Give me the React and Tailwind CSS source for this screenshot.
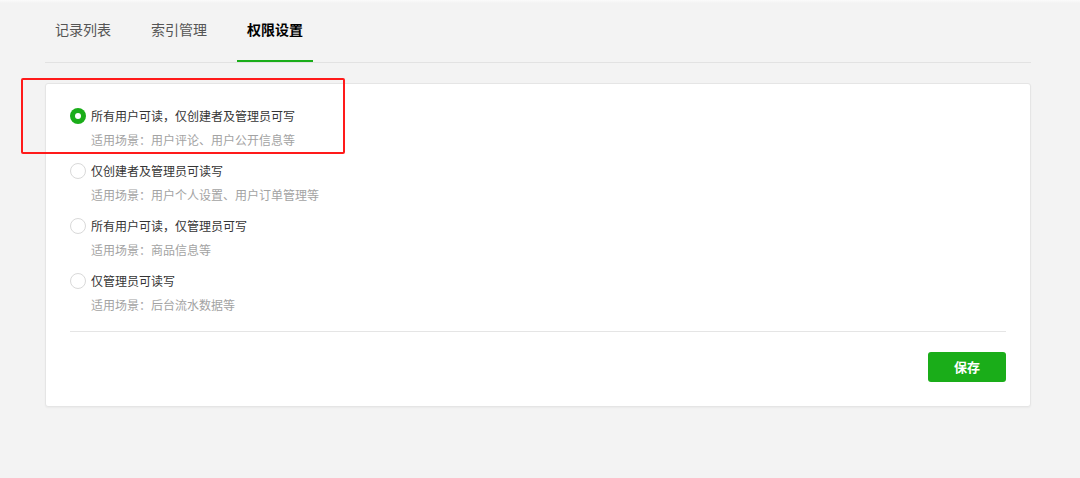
const options = [
  { title: '所有用户可读，仅创建者及管理员可写', desc: '适用场景：用户评论、用户公开信息等' },
  { title: '仅创建者及管理员可读写', desc: '适用场景：用户个人设置、用户订单管理等' },
  { title: '所有用户可读，仅管理员可写', desc: '适用场景：商品信息等' },
  { title: '仅管理员可读写', desc: '适用场景：后台流水数据等' },
];

const tabs = ['记录列表', '索引管理', '权限设置'];

const Radio = ({ checked }) =>
  checked ? (
    <span className="flex h-4 w-4 shrink-0 items-center justify-center rounded-full bg-[#1aad19]">
      <span className="h-[6px] w-[6px] rounded-full bg-white" />
    </span>
  ) : (
    <span className="h-4 w-4 shrink-0 rounded-full border border-[#d9d9d9] bg-white" />
  );

const App = () => {
  const active = 2;
  const selected = 0;

  return (
    <div
      className="relative h-[478px] w-full overflow-hidden bg-[#f3f3f3]"
      style={{ fontFamily: '"Noto Sans CJK SC", "Noto Sans", sans-serif' }}
    >
      <div className="h-[3px] bg-gradient-to-b from-[#fbfbfb] to-[#f3f3f3]" />

      <div className="ml-[45px] w-[986px]">
        {/* tabs */}
        <div className="flex h-[60px] gap-5 border-b border-[#e2e2e2]">
          {tabs.map((t, i) => (
            <div
              key={t}
              className={
                'flex items-center px-[10px] pb-[4px] text-[14px] ' +
                (i === active
                  ? 'border-b-2 border-[#1aad19] font-bold text-[#000]'
                  : 'border-b-2 border-transparent text-[#555]')
              }
            >
              {t}
            </div>
          ))}
        </div>

        {/* card */}
        <div className="mt-5 rounded-[3px] border border-[#e5e5e5] bg-white px-6 pb-6 pt-[22px] shadow-[0_1px_2px_rgba(0,0,0,0.04)]">
          <div className="flex flex-col gap-[11px]">
            {options.map((o, i) => (
              <div key={o.title} className="flex flex-col gap-1">
                <div className="flex h-5 items-center gap-[5px]">
                  <Radio checked={i === selected} />
                  <span className="text-[12px] text-[#353535]">{o.title}</span>
                </div>
                <div className="pl-[21px] text-[12px] leading-5 text-[#a3a3a3]">{o.desc}</div>
              </div>
            ))}
          </div>

          <div className="mt-[16px] border-t border-[#e5e5e5]" />

          <div className="mt-[20px] flex justify-end">
            <button className="h-[30px] w-[78px] rounded-[3px] bg-[#1aad19] text-[13px] font-bold text-white">
              保存
            </button>
          </div>
        </div>
      </div>

      {/* annotation box */}
      <div className="absolute left-[21px] top-[78px] h-[76px] w-[324px] rounded-[2px] border-2 border-[#ff1a1a]" />
    </div>
  );
};

export default App;
